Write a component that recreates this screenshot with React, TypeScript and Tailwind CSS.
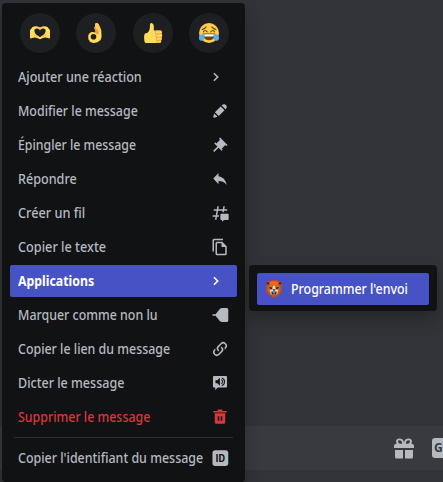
import React from "react";

type IconName = "chevron" | "edit" | "pin" | "reply" | "thread" | "copy" | "unread" | "link" | "speak" | "trash" | "id";

function Icon({ name }: { name: IconName }) {
  if (name === "chevron") {
    return (
      <svg className="mr-[3px] h-[18px] w-[18px] shrink-0" viewBox="0 0 18 18" fill="none" stroke="currentColor" strokeWidth="1.6">
        <path d="M5.9 5.2 9.7 9l-3.8 3.8" />
      </svg>
    );
  }
  return (
    <svg className="h-[18px] w-[18px] shrink-0" viewBox="0 0 24 24" fill="currentColor">
      {name === "edit" && (
        <path d="M19.2929 9.8299L19.9409 9.18278C21.353 7.77064 21.353 5.47197 19.9409 4.05892C18.5287 2.64678 16.2292 2.64678 14.817 4.05892L14.1699 4.70694L19.2929 9.8299ZM12.8962 5.97688L5.18469 13.6906L10.3085 18.813L18.0201 11.0992L12.8962 5.97688ZM4.11851 20.9704L8.75906 19.8112L4.18692 15.239L3.02678 19.8796C2.95028 20.1856 3.04028 20.5105 3.26349 20.7337C3.48669 20.9569 3.8116 21.046 4.11851 20.9704Z" />
      )}
      {name === "pin" && (
        <path d="M22 12L12.101 2.10101L10.686 3.51401L12.101 4.92901L7.15096 9.87801V9.88001L5.73596 8.46501L4.32196 9.88001L8.56496 14.122L2.90796 19.778L4.32196 21.192L9.97896 15.536L14.222 19.778L15.636 18.364L14.222 16.95L19.171 12H19.172L20.586 13.414L22 12Z" />
      )}
      {name === "reply" && (
        <path d="M10 8.26667V4L3 11.4667L10 18.9333V14.56C15 14.56 18.5 16.2667 21 20C20 14.6667 17 9.33333 10 8.26667Z" />
      )}
      {name === "thread" && (
        <>
          <path d="M5.31 21 6 17H2l.35-2h4l1.06-6h-4l.35-2h4l.7-4h2l-.7 4h6l.7-4h2l-.7 4h4l-.35 2h-4l-.36 2.04h-2L15.41 9h-6l-1.06 6h2.21v2H8l-.7 4Z" />
          <path d="M13.44 12.96a.96.96 0 0 0-.96.96v6.3c0 .53.43.96.96.96h1.2v2.5l2.8-2.5h5.12c.53 0 .96-.43.96-.96v-6.3a.96.96 0 0 0-.96-.96Z" />
        </>
      )}
      {name === "copy" && (
        <path d="M16 1H4a2 2 0 0 0-2 2v15h2V3h12ZM15 5H8a2 2 0 0 0-2 2v14c0 1.1.9 2 2 2h11a2 2 0 0 0 2-2V11ZM8 21V7h6v5h5v9Z" fillRule="evenodd" />
      )}
      {name === "unread" && (
        <path d="M21 2.6h-6.2a4 4 0 0 0-3.1 1.5L6.1 10.9H2v2.2h4.1l5.6 6.8a4 4 0 0 0 3.1 1.5H21a2 2 0 0 0 2-2V4.6a2 2 0 0 0-2-2Z" />
      )}
      {name === "link" && (
        <path d="M10.59 13.41c.41.39.41 1.03 0 1.42-.39.39-1.03.39-1.42 0a5.003 5.003 0 0 1 0-7.07l3.54-3.54a5.003 5.003 0 0 1 7.07 0 5.003 5.003 0 0 1 0 7.07l-1.49 1.49c.01-.82-.12-1.64-.4-2.42l.47-.48a2.982 2.982 0 0 0 0-4.24 2.982 2.982 0 0 0-4.24 0l-3.53 3.53a2.982 2.982 0 0 0 0 4.24zm2.82-4.24c.39-.39 1.03-.39 1.42 0a5.003 5.003 0 0 1 0 7.07l-3.54 3.54a5.003 5.003 0 0 1-7.07 0 5.003 5.003 0 0 1 0-7.07l1.49-1.49c-.01.82.12 1.64.4 2.43l-.47.47a2.982 2.982 0 0 0 0 4.24 2.982 2.982 0 0 0 4.24 0l3.53-3.53a2.982 2.982 0 0 0 0-4.24.973.973 0 0 1 0-1.42z" />
      )}
      {name === "speak" && (
        <>
          <path d="M4 2.6h16a1.4 1.4 0 0 1 1.4 1.4v12.6A1.4 1.4 0 0 1 20 18H9.2l-3.6 3.4V18H4a1.4 1.4 0 0 1-1.4-1.4V4A1.4 1.4 0 0 1 4 2.6Z" />
          <path d="M13.7 7.6a3 3 0 0 1 0 5.4M14.4 5.2a5.4 5.4 0 0 1 0 10.2" fill="none" stroke="#111214" strokeWidth="1.4" />
          <path d="M6 8.3h2.4l3.5-3.2v10.4l-3.5-3.2H6Z" fill="#111214" />
        </>
      )}
      {name === "trash" && (
        <>
          <path d="M15 3.999V2H9v1.999H3v2h18v-2Z" />
          <path d="M5 7v12a2 2 0 0 0 2 2h10a2 2 0 0 0 2-2V7Zm6 10H9v-6h2Zm4 0h-2v-6h2Z" />
        </>
      )}
      {name === "id" && (
        <>
          <rect x="2" y="1.7" width="21" height="21" rx="3.6" />
          <text x="12.5" y="17" textAnchor="middle" fill="#111214" fontSize="13.5" fontWeight="700" letterSpacing="0.3" fontFamily="Roboto, sans-serif">ID</text>
        </>
      )}
    </svg>
  );
}

const items: { label: string; icon: IconName; fit: string; kind?: "active" | "danger" }[] = [
  { label: "Ajouter une réaction", icon: "chevron", fit: "scale-x-[.9]" },
  { label: "Modifier le message", icon: "edit", fit: "scale-x-[.885]" },
  { label: "Épingler le message", icon: "pin", fit: "scale-x-[.88]" },
  { label: "Répondre", icon: "reply", fit: "scale-x-[.9]" },
  { label: "Créer un fil", icon: "thread", fit: "scale-x-[.91]" },
  { label: "Copier le texte", icon: "copy", fit: "scale-x-[.907]" },
  { label: "Applications", icon: "chevron", fit: "scale-x-[.88]", kind: "active" },
  { label: "Marquer comme non lu", icon: "unread", fit: "scale-x-[.886]" },
  { label: "Copier le lien du message", icon: "link", fit: "scale-x-[.886]" },
  { label: "Dicter le message", icon: "speak", fit: "scale-x-[.894]" },
  { label: "Supprimer le message", icon: "trash", fit: "scale-x-[.885]", kind: "danger" },
];

function Row({ label, icon, fit, kind }: (typeof items)[number]) {
  const color =
    kind === "active"
      ? "bg-[#4752c4] text-white font-bold"
      : kind === "danger"
        ? "text-[#da373c] font-medium"
        : "text-[#b5bac1] font-medium";
  return (
    <div className={`flex h-8 shrink-0 items-center justify-between rounded-[2px] pr-2 pl-2 text-[14px] leading-[18px] whitespace-nowrap ${color}`}>
      <div className="w-0 flex-1">
        <span className={`inline-block origin-left ${fit}`}>{label}</span>
      </div>
      <Icon name={icon} />
    </div>
  );
}

function HeartHands() {
  return (
    <svg className="h-5 w-5" viewBox="0 0 20 20">
      <path d="M0 7.2 2.5 4.1Q6 2 10 4.6 14 2 17.5 4.1L20 7.2V15.4L15.6 14.4Q13 14.5 10 16.3 7 14.5 4.4 14.4L0 15.4Z" fill="#ffdc5d" />
      <path d="M10 14C7.5 12.8 4.4 10.6 4.4 7.8c0-2.6 3.9-3.1 5.6-.3 1.7-2.8 5.6-2.3 5.6.3 0 2.8-3.1 5-5.6 6.2Z" fill="#1e1f22" />
      <path d="M4.2 11.4q1 1.8 3 2.6M15.8 11.4q-1 1.8-3 2.6M10 4.8v1.8" stroke="#ef9645" strokeWidth=".7" fill="none" />
    </svg>
  );
}

function OkHand() {
  return (
    <svg className="h-5 w-5" viewBox="0 0 20 20">
      <path d="M9.2 1.1C9.6-.2 11.7-.3 12.4 1.1l1.7 3.5 1.2 3.1.2 4.3q.6 3.4-1.7 5.8-2.5 2.4-6.3 2.1-3.6-.1-4.2-2.3-1.2-1-1-3.3-.4-2.5 1.1-3.9 1.3-1.5 3.5-1.4l2.7.6-.7-3.8Z" fill="#ffdc5d" />
      <path d="M7.7 4.3Q8.9 3.5 9.8 4.6l2.8 4-.2 2.6-2.3-.9Z" fill="#ef9645" />
      <path d="M9.2 1.1 9.7 4.2 13 9.2l2.3-1.5-1.2-3.1-1.7-3.5C11.7-.3 9.6-.2 9.2 1.1Z" fill="#ffcc4d" />
      <circle cx="7.5" cy="13.7" r="2.8" fill="#1e1f22" />
      <path d="m9.7 10.2 1.7 1.2 1.5-1.1" stroke="#ef9645" strokeWidth=".7" fill="none" />
    </svg>
  );
}

function ThumbsUp() {
  return (
    <svg className="h-5 w-5" viewBox="-1 0 20 20">
      <path d="M.9 10.4q2.6 0 4.1-2.5Q6.3 5.3 5.9 2 5.8.1 7.3 0 9.3.2 9.8 2.6v5h6.6q1.5 0 1.7 1.5.1.9-.5 1.6.8.6.6 2-.1 1-.7 1.5.6.7.4 1.7-.1.9-.8 1.4.4.6.1 1.4-.4 1.2-1.9 1.2H1.2Q0 18.4.1 14.3.1 11.4.9 10.4Z" fill="#ffdc5d" />
      <path d="M17.4 10.9h-4.7q-1.5-.2-1.5-1.6t1.6-1.6h4M17.5 14.3h-4.4q-1.3-.1-1.3-1.6t1.5-1.8M17 17.3h-3.7q-1.2-.2-1.2-1.5t1.4-1.4M13.6 17.4q-1 .3-.9 1.3t1.2 1.1h2.2" fill="none" stroke="#ef9645" strokeWidth=".9" />
    </svg>
  );
}

function Joy() {
  return (
    <svg className="h-5 w-5" viewBox="0 0 20 20">
      <circle cx="10" cy="10" r="10" fill="#ffcc4d" />
      <path d="M3.8 10.6h12.4q0 6.6-6.2 6.6T3.8 10.6Z" fill="#664500" />
      <path d="M4.7 11.2h10.6q-.2 2.2-1 2.4H5.7q-.8-.2-1-2.4Z" fill="#fff" />
      <path d="M4.4 8.8Q6 6.1 8.3 8.8M11.7 8.8q2.3-2.7 3.9 0M3.1 6.4q2.7-.3 4-2.5M16.9 6.4q-2.7-.3-4-2.5" fill="none" stroke="#664500" strokeWidth="1.1" strokeLinecap="round" />
      <path d="M5.3 10.7Q1.5 10.8.2 13.6c-.8 2 .2 4 1.8 4.2 3.4.2 3.8-3.1 3.3-7.1ZM14.7 10.7q3.8.1 5.1 2.9c.8 2-.2 4-1.8 4.2-3.4.2-3.8-3.1-3.3-7.1Z" fill="#5dadec" />
    </svg>
  );
}

function Lion() {
  return (
    <svg className="h-[18px] w-[18px] shrink-0" viewBox="0 0 18 18">
      <path d="M2 1.6 4.4 1Q9-1 13.6 1l2.4.6.7 2.6.2 7-2.6 3.9L9 18l-5.3-2.9L1.1 11.2l.2-7Z" fill="#c94a1c" />
      <path d="M4.4 2.8Q9-1 13.6 2.8L12.4 5.4H5.6Z" fill="#f26622" />
      <path d="M3.4 6.4Q4.4 4.9 6.6 5.2L9 6.2l2.4-1q2.2-.3 3.2 1.2v4.2L12 15H6l-2.6-4.4Z" fill="#b97843" />
      <path d="m4.3 7 2.7.6v1.5l-2.4-.5ZM13.7 7l-2.7.6v1.5l2.4-.5Z" fill="#241c1b" />
      <path d="M8.1 5.8h1.8l.6 3.8 2.6.4-.6 3L9 15.2 5.5 13l-.6-3 2.6-.4Z" fill="#ecd9c4" />
      <path d="M7.5 9.3h3L9 11.2ZM6 11.8l3-.4 3 .4-1.4 2.7H7.4Z" fill="#2d1f1d" />
      <path d="M7.6 12.4h2.8l-.5.8H8.1Z" fill="#fff" />
      <circle cx="2.9" cy="3.2" r="1.3" fill="#39302c" />
      <circle cx="15.1" cy="3.2" r="1.3" fill="#39302c" />
    </svg>
  );
}

export default function App() {
  const reactions = [HeartHands, OkHand, ThumbsUp, Joy];
  return (
    <div className="relative flex h-[482px] w-[443px] flex-col overflow-hidden bg-[#313338] font-['Noto_Sans',sans-serif]">
      <div className="h-[426px] shrink-0" />
      <div className="flex h-11 shrink-0 items-center bg-[#383a40] pl-[394px] text-[#b5bac1]">
        <svg className="h-[21px] w-5 shrink-0" viewBox="0 0 20 21">
          <path d="M9 6.6H6.1Q3 6.4 3 3.6C3.2.7 7.6.5 9 4Zm2 0h2.9Q17 6.4 17 3.6c-.2-2.9-4.6-3.1-6 .4Z" fill="none" stroke="currentColor" strokeWidth="1.9" />
          <path d="M1.8 6h16.4A1.8 1.8 0 0 1 20 7.8V10H0V7.8A1.8 1.8 0 0 1 1.8 6ZM1 12h8v8.5H2.5A1.5 1.5 0 0 1 1 19Zm10 0h8v7a1.5 1.5 0 0 1-1.5 1.5H11Z" fill="currentColor" />
        </svg>
        <div className="ml-[18px] flex h-5 w-[11px] shrink-0 items-center rounded-l-[3px] bg-[#b5bac1] pl-[2px] text-[12px] leading-none font-bold text-[#383a40]">G</div>
      </div>

      <div className="absolute top-[3px] left-[2px] flex h-[479px] w-[243px] flex-col rounded bg-[#111214] px-2 shadow-[0_8px_16px_rgba(0,0,0,0.24)]">
        <div className="flex h-[58px] shrink-0 items-center justify-between pt-[2px] pr-2 pl-[10px]">
          {reactions.map((Emoji, i) => (
            <div key={i} className="flex h-10 w-10 items-center justify-center rounded-full bg-[#1e1f22]">
              <Emoji />
            </div>
          ))}
        </div>
        <div className="flex flex-col gap-[2px]">
          {items.map((item) => (
            <Row key={item.label} {...item} />
          ))}
        </div>
        <div className="mx-1 mt-1 mb-1 h-px shrink-0 bg-[#2e2f34]" />
        <Row label="Copier l'identifiant du message" icon="id" fit="scale-x-[.889]" />
      </div>

      <div className="absolute top-[265px] left-[249px] h-[46px] w-[188px] rounded bg-[#111214] px-2 pt-2 shadow-[0_8px_16px_rgba(0,0,0,0.24)]">
        <div className="flex h-8 w-[172px] items-center rounded-[2px] bg-[#4752c4] pl-2 text-[14px] leading-[18px] font-medium whitespace-nowrap text-white">
          <Lion />
          <div className="ml-2 w-0 flex-1">
            <span className="inline-block origin-left scale-x-[.886]">Programmer l'envoi</span>
          </div>
        </div>
      </div>
    </div>
  );
}
